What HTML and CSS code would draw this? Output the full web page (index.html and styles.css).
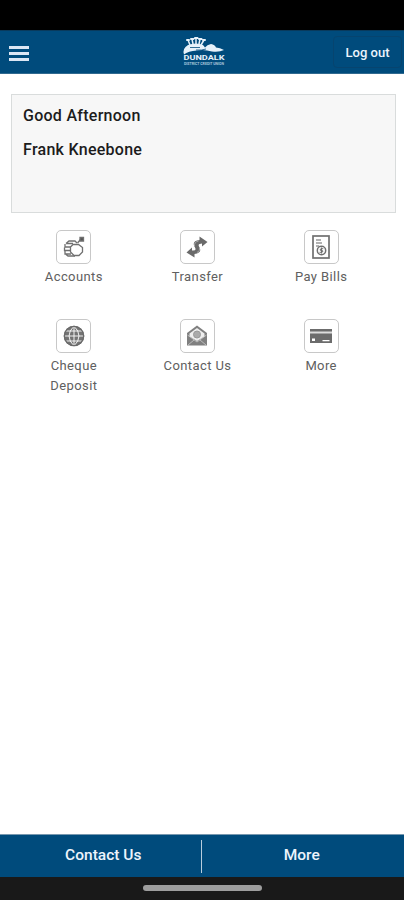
FILE: index.html
```html
<!DOCTYPE html>
<html lang="en">
<head>
<meta charset="utf-8">
<title>Dundalk District Credit Union</title>
<link rel="stylesheet" href="styles.css">
</head>
<body>
<div class="status-bar"></div>
<header class="top-bar">
  <button class="menu" aria-label="Menu"><span></span><span></span><span></span></button>
  <svg class="logo" viewBox="0 0 46 30" width="46" height="30">
    <g fill="none" stroke="#e6f1fa" stroke-width="1.500" stroke-linecap="round">
      <path d="M9 9 7 4M12 8l-1-5M15 8V2M18 8l1-5M20 9l3-5"/>
      <path d="M6 4h2M10 3h2.500M14 2h2.500M18 3h2.500M22 4h2" stroke-width="2"/>
    </g>
    <path d="M7 9q8-3 15 0l2 2.500q2-3 6-3.500 4 .5 5 3.500 4 0 8 2.500-5 2.500-12 1.500-8-2.500-15-1-9 .5-13 4-2-6 4-9.500z" fill="#e6f1fa"/>
    <path d="M9 11.500h10M15 14q6 .5 10-1" fill="none" stroke="#004b7c" stroke-width=".8"/>
    <text class="logo-name" x="2.500" y="24" textLength="41" lengthAdjust="spacingAndGlyphs">DUNDALK</text>
    <text class="logo-sub" x="3" y="28.500" textLength="40" lengthAdjust="spacingAndGlyphs">DISTRICT CREDIT UNION</text>
  </svg>
  <button class="logout">Log out</button>
</header>
<main class="content">
  <section class="greeting">
    <p>Good Afternoon</p>
    <p>Frank Kneebone</p>
  </section>
  <nav class="tiles">
    <a class="tile">
      <span class="tile-icon"><svg viewBox="0 0 24 24" width="24" height="24" fill="none" stroke="#707070" stroke-width="1.300">
        <path d="M4 8.500 7 6h6l2 2M4 8.500h7M3 9v3h6M2.500 12.500v3h6M3 16v3h6M4 19.500l2 1.500h7"/>
        <path d="M11 9.500h5.500l4 3v4.500l-3.500 3.500h-5L8.500 17v-5z" fill="#fff"/>
        <path d="m15.500 8 3-3.500"/><path d="M18 2.500h3.500V6H18z" fill="#555"/>
      </svg></span>
      <span class="label">Accounts</span>
    </a>
    <a class="tile">
      <span class="tile-icon"><svg viewBox="0 0 24 24" width="24" height="24">
        <path d="M14.500 1.500 22.500 7 17 11.500V8.500Q12.500 8.500 14 11.500 18 18 9.500 19V22.500L1.500 17.500 7 12.500V15.500Q12 16 10 12.500 6 6 14.500 5z" fill="#6a6a6a"/>
        <path d="M9.500 11q-.5-4 4-5M14.500 12.500q1 3.500-2.500 5" fill="none" stroke="#aaa"/>
      </svg></span>
      <span class="label">Transfer</span>
    </a>
    <a class="tile">
      <span class="tile-icon"><svg viewBox="0 0 24 24" width="24" height="24" fill="none" stroke="#707070">
        <rect x="4" y="1" width="16" height="22" stroke-width="1.700"/>
        <path d="M7 5h5M7 8h6M7 11h3" stroke="#999" stroke-width="1.300"/>
        <circle cx="12.500" cy="15.500" r="4.200" stroke-width="1.500"/>
        <path d="M14.300 13.700h-2.500q-2 1.800.7 1.800t.7 1.800h-2.700M12.500 12.500v6"/>
      </svg></span>
      <span class="label">Pay Bills</span>
    </a>
    <a class="tile">
      <span class="tile-icon"><svg viewBox="0 0 24 24" width="24" height="24">
        <circle cx="12" cy="12" r="10.200" fill="#747474"/>
        <path d="M12 2v20M2 12h20M3.500 7h17M3.500 17h17M12 2q-10 10 0 20 10-10 0-20" fill="none" stroke="#fff" stroke-width=".9"/>
        <circle cx="12" cy="12" r="9.700" fill="none" stroke="#6a6a6a" stroke-width="1.300"/>
      </svg></span>
      <span class="label">Cheque Deposit</span>
    </a>
    <a class="tile">
      <span class="tile-icon"><svg viewBox="0 0 24 24" width="24" height="24">
        <path d="M2 9 12 1.500 22 9v12.500H2z" fill="#808080"/>
        <path d="M4.500 9.500 12 4l7.500 5.500v3L12 17l-7.500-4.500z" fill="#eee"/>
        <circle cx="12" cy="10.500" r="3.500" fill="#aaa" stroke="#999"/>
        <path d="m2.500 11 9.500 7 9.500-7M3 21l6-5M21 21l-6-5" fill="none" stroke="#ccc" stroke-width=".8"/>
      </svg></span>
      <span class="label">Contact Us</span>
    </a>
    <a class="tile">
      <span class="tile-icon"><svg viewBox="0 0 24 24" width="24" height="24">
        <path d="M1 5h22v14H1z" fill="#6c6c6c"/>
        <path d="M1 7.500h22v2H1z" fill="#ddd"/>
        <path d="M3 14.500h3v2.500H3zM13.500 16h7v1.200h-7z" fill="#fff"/>
      </svg></span>
      <span class="label">More</span>
    </a>
  </nav>
</main>
<footer class="bottom-bar"><a>Contact Us</a><span class="divider"></span><a>More</a></footer>
<div class="gesture-bar"><span></span></div>
</body>
</html>
```
FILE: styles.css
```css
* { box-sizing: border-box; }
body {
  margin: 0;
  height: 900px;
  display: flex;
  flex-direction: column;
  background: #fff;
  font-family: Roboto, "Liberation Sans", sans-serif;
}
button { border: 0; padding: 0; background: none; color: inherit; font: inherit; }
.status-bar { height: 30px; background: #000; }
.top-bar {
  height: 44px;
  display: grid;
  grid-template-columns: 1fr 46px 1fr;
  align-items: center;
  padding: 0 2px 0 9px;
  background: #004b7c;
  border-top: 1px solid #093a5c;
  border-bottom: 1px solid #30698f;
  color: #edf4fc;
}
.menu { width: 20px; display: grid; gap: 3px; margin-top: 2px; }
.menu span { height: 3px; background: #dbe6f4; }
.logo { display: block; margin-left: -2px; margin-top: -2px; }
.logo-name { font: 700 8px Roboto, sans-serif; fill: #e6f1fa; }
.logo-sub { font: 700 3.400px Roboto, sans-serif; fill: #a9c6db; }
.logout {
  justify-self: end;
  width: 69px;
  height: 32px;
  border: 1px solid #06446f;
  border-radius: 4px;
  font-size: 13px;
  font-weight: 500;
}
.content { flex: 1; padding-top: 20px; }
.greeting {
  height: 119px;
  margin: 0 8px 0 11px;
  padding: 11px 11px;
  border: 1px solid #d9dcdc;
  background: #f7f7f7;
}
.greeting p {
  margin: 0 0 14px;
  font-size: 16px;
  line-height: 20px;
  font-weight: 500;
  letter-spacing: .27px;
  color: #1c1c1c;
}
.tiles {
  display: grid;
  grid-template-columns: repeat(3, 1fr);
  grid-auto-rows: 89px;
  padding: 17px 21px 0 12px;
}
.tile { display: flex; flex-direction: column; align-items: center; }
.tile-icon {
  width: 35px;
  height: 34px;
  display: grid;
  place-items: center;
  border: 1px solid #c8c8c8;
  border-radius: 5px;
}
.label {
  max-width: 72px;
  margin-top: 3px;
  font-size: 13px;
  line-height: 19.500px;
  letter-spacing: .4px;
  text-align: center;
  color: #606060;
}
.bottom-bar {
  height: 43px;
  display: grid;
  grid-template-columns: 1fr 1px 1fr;
  align-items: center;
  padding-right: 2px;
  background: #004b7c;
  border-top: 1px solid #7898af;
  color: #edf4fc;
  font-size: 15.500px;
  font-weight: 500;
  text-align: center;
}
.bottom-bar a { padding: 0 0 3px 6px; }
.bottom-bar a:last-child { padding-left: 0; }
.divider { height: 33px; background: #b9cddd; }
.gesture-bar { height: 23px; display: flex; justify-content: center; padding-top: 8px; background: #191919; }
.gesture-bar span { width: 119px; height: 6px; border-radius: 3px; background: #9d9d9d; }
```
